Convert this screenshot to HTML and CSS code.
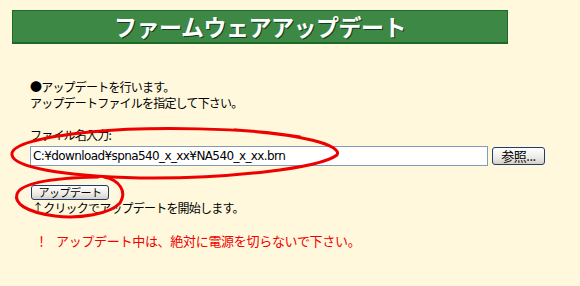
FILE: index.html
```html
<html>

<head>
	<title>ファームウェアアップデート</title>

	<link rel="stylesheet" href="styles.css">
</head>

<body>
	<div class="title">ファームウェアアップデート</div>

	<div class="content">
		<p class="intro">
			●アップデートを行います。<br>
			アップデートファイルを指定して下さい。
		</p>

		<p class="label">ファイル名入力:</p>
		<div class="file-row">
			<div class="file-input">C:¥download¥spna540_x_xx¥NA540_x_xx.brn</div>
			<div class="btn browse">参照...</div>
		</div>

		<div class="btn update">アップデート</div>
		<p class="hint">↑クリックでアップデートを開始します。</p>

		<p class="warn"><span class="mark">！</span>アップデート中は、絶対に電源を切らないで下さい。</p>
	</div>

	<svg class="marks" width="580" height="286" viewBox="0 0 580 286">
		<path d="M 300 137 C 250 128, 150 126, 90 132 C 40 137, 10 145, 12 155 C 14 167, 60 176, 140 178 C 230 179, 320 168, 337 155 C 343 145, 300 134, 235 130" />
		<path d="M 104 177 C 120 180, 127 192, 120 203 C 110 214, 80 219, 55 216 C 25 212, 14 203, 17 194 C 21 183, 50 178, 98 177" />
	</svg>
</body>

</html>
```

FILE: styles.css
```css
body {
	margin: 0;
	background-color: #fff8dc;
	font-family: "Noto Sans CJK JP", "DejaVu Sans", sans-serif;
	font-size: 12px;
	color: #000;
	position: relative;
	width: 580px;
	height: 286px;
	overflow: hidden;
}

.title {
	margin: 10px 0 0 12px;
	width: 494px;
	height: 31px;
	line-height: 31px;
	background-color: #3d8844;
	border: 1px solid #1d6a28;
	border-bottom: 2px solid #1d6a28;
	color: #fff;
	font-size: 23px;
	font-weight: bold;
	text-align: center;
	letter-spacing: -0.5px;
	text-shadow: 1px 1px 0 #123d18;
}

.content {
	padding-left: 30px;
}

p {
	margin: 0;
	letter-spacing: -0.8px;
}

.intro {
	margin-top: 35px;
	line-height: 16px;
}

.label {
	margin-top: 17px;
	line-height: 14px;
}

.file-row {
	display: flex;
	align-items: center;
	gap: 4px;
	margin-top: 4px;
}

.file-input {
	width: 454px;
	height: 18px;
	line-height: 18px;
	background-color: #fff;
	border: 1px solid #7f9db9;
	padding-left: 2px;
	font-family: "DejaVu Sans", "Noto Sans CJK JP", sans-serif;
	font-size: 12px;
	letter-spacing: -0.6px;
}

.btn {
	box-sizing: border-box;
	text-align: center;
	border: 1px solid #1c3d6e;
	border-radius: 3px;
	background: linear-gradient(#ffffff, #ecebe5 60%, #d6d0c5);
	letter-spacing: -0.5px;
}

.browse {
	width: 53px;
	height: 18px;
	line-height: 15px;
	font-size: 13px;
}

.update {
	margin-top: 19px;
	margin-left: 1px;
	width: 78px;
	height: 15px;
	line-height: 13px;
	font-size: 11px;
}

.hint {
	margin-top: 0;
	line-height: 15px;
	padding-left: 2px;
}

.warn {
	margin-top: 18px;
	padding-left: 5px;
	color: #f00000;
	font-size: 13px;
	letter-spacing: -0.3px;
	line-height: 15px;
}

.mark {
	display: inline-block;
	width: 21px;
}

.marks {
	position: absolute;
	top: 0;
	left: 0;
	pointer-events: none;
}

.marks path {
	fill: none;
	stroke: #ee0000;
	stroke-width: 3;
	stroke-linecap: round;
}
```
